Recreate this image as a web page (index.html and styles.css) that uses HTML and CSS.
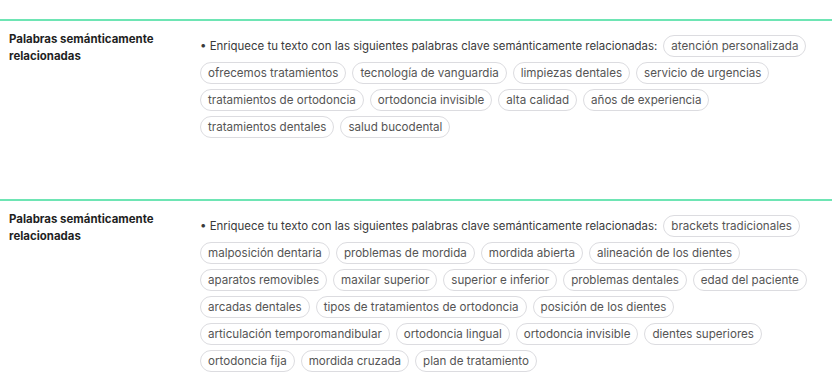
FILE: index.html
```html
<!DOCTYPE html>
<html lang="es">
<head>
<meta charset="utf-8">
<link rel="stylesheet" href="styles.css">
</head>
<body>
<div class="list">
  <section class="row">
    <div class="label">Palabras semánticamente relacionadas</div>
    <div class="content">
      <span class="intro">• Enriquece tu texto con las siguientes palabras clave semánticamente relacionadas:</span>
      <span class="chip">atención personalizada</span>
      <span class="chip">ofrecemos tratamientos</span>
      <span class="chip">tecnología de vanguardia</span>
      <span class="chip">limpiezas dentales</span>
      <span class="chip">servicio de urgencias</span>
      <span class="chip">tratamientos de ortodoncia</span>
      <span class="chip">ortodoncia invisible</span>
      <span class="chip">alta calidad</span>
      <span class="chip">años de experiencia</span>
      <span class="chip">tratamientos dentales</span>
      <span class="chip">salud bucodental</span>
    </div>
  </section>
  <section class="row">
    <div class="label">Palabras semánticamente relacionadas</div>
    <div class="content">
      <span class="intro">• Enriquece tu texto con las siguientes palabras clave semánticamente relacionadas:</span>
      <span class="chip">brackets tradicionales</span>
      <span class="chip">malposición dentaria</span>
      <span class="chip">problemas de mordida</span>
      <span class="chip">mordida abierta</span>
      <span class="chip">alineación de los dientes</span>
      <span class="chip">aparatos removibles</span>
      <span class="chip">maxilar superior</span>
      <span class="chip">superior e inferior</span>
      <span class="chip">problemas dentales</span>
      <span class="chip">edad del paciente</span>
      <span class="chip">arcadas dentales</span>
      <span class="chip">tipos de tratamientos de ortodoncia</span>
      <span class="chip">posición de los dientes</span>
      <span class="chip">articulación temporomandibular</span>
      <span class="chip">ortodoncia lingual</span>
      <span class="chip">ortodoncia invisible</span>
      <span class="chip">dientes superiores</span>
      <span class="chip">ortodoncia fija</span>
      <span class="chip">mordida cruzada</span>
      <span class="chip">plan de tratamiento</span>
    </div>
  </section>
</div>
</body>
</html>
```
FILE: styles.css
```css
html, body {
  margin: 0;
  padding: 0;
  background: #ffffff;
}

body {
  font-family: Inter, "Noto Sans", sans-serif;
  color: #333;
}

.list {
  padding-top: 19px;
  display: flex;
  flex-direction: column;
  gap: 47px;
}

.row {
  border-top: 2px solid #6ee5b4;
  display: grid;
  grid-template-columns: 200px 1fr;
  padding: 14px 0 14px;
}

.label {
  padding-left: 9px;
  max-width: 170px;
  margin-top: -4px;
  font-size: 11.45px;
  line-height: 17px;
  font-weight: 700;
  color: #1f1f1f;
}

.content {
  display: flex;
  flex-wrap: wrap;
  align-items: center;
  gap: 5px 6px;
  padding-right: 20px;
}

.intro {
  font-size: 11.45px;
  line-height: 17px;
  color: #3a3a3a;
}

.chip {
  display: inline-block;
  box-sizing: border-box;
  height: 22px;
  line-height: 20px;
  padding: 0 7px;
  border: 1px solid #dcdce0;
  border-radius: 11px;
  font-size: 11.6px;
  color: #555;
  white-space: nowrap;
}
```
